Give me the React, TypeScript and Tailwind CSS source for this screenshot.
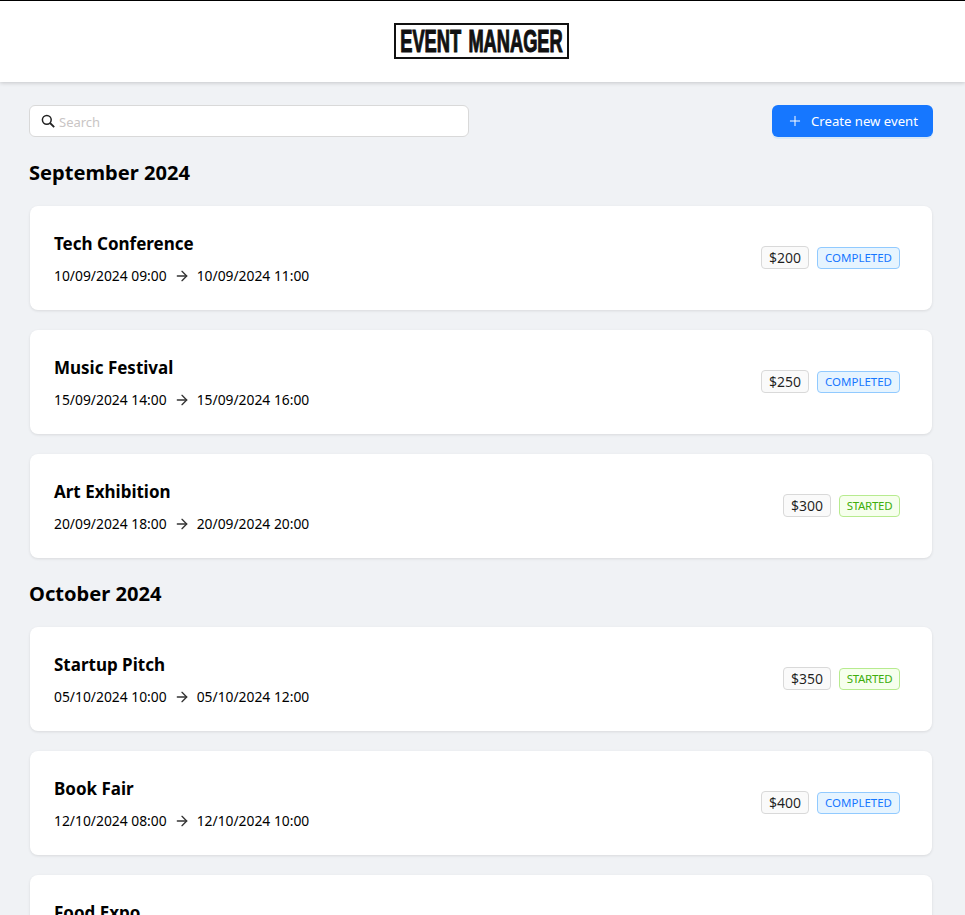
import { ArrowRight, Plus } from 'lucide-react'

type EventStatus = 'COMPLETED' | 'STARTED'

interface EventItem {
  title: string
  start: string
  end: string
  price: number
  status: EventStatus
}

const MONTHS: { label: string; events: EventItem[] }[] = [
  {
    label: 'September 2024',
    events: [
      { title: 'Tech Conference', start: '10/09/2024 09:00', end: '10/09/2024 11:00', price: 200, status: 'COMPLETED' },
      { title: 'Music Festival', start: '15/09/2024 14:00', end: '15/09/2024 16:00', price: 250, status: 'COMPLETED' },
      { title: 'Art Exhibition', start: '20/09/2024 18:00', end: '20/09/2024 20:00', price: 300, status: 'STARTED' },
    ],
  },
  {
    label: 'October 2024',
    events: [
      { title: 'Startup Pitch', start: '05/10/2024 10:00', end: '05/10/2024 12:00', price: 350, status: 'STARTED' },
      { title: 'Book Fair', start: '12/10/2024 08:00', end: '12/10/2024 10:00', price: 400, status: 'COMPLETED' },
      { title: 'Food Expo', start: '18/10/2024 11:00', end: '18/10/2024 13:00', price: 450, status: 'STARTED' },
    ],
  },
]

function EventCard({ event }: { event: EventItem }) {
  const statusClass =
    event.status === 'COMPLETED'
      ? 'w-[83px] border-[#91caff] bg-[#e6f4ff] text-[#1677ff]'
      : 'w-[61px] border-[#b7eb8f] bg-[#f6ffed] tracking-[-0.3px] text-[#3fae0c]'

  return (
    <div className="flex h-[104px] items-center justify-between rounded-lg bg-white pl-[24px] pr-[32px] shadow-[0_1px_3px_rgba(0,0,0,0.1)]">
      <div className="pt-[2px]">
        <h3 className="text-[17px] leading-[24px] font-bold text-black">{event.title}</h3>
        <div className="mt-[9px] flex items-center text-[13.85px] leading-[22px] text-black">
          <span>{event.start}</span>
          <ArrowRight size={16} strokeWidth={2} className="mx-[7px] text-[#333]" />
          <span>{event.end}</span>
        </div>
      </div>
      <div className="flex items-end gap-[8px] pb-[2px]">
        <span className="flex h-[23px] items-center rounded border border-[#d9d9d9] bg-[#fafafa] px-[7px] text-[14px] text-[rgba(0,0,0,0.88)]">
          ${event.price}
        </span>
        <span className={`flex h-[22px] items-center justify-center rounded border text-[11.5px] ${statusClass}`}>
          {event.status}
        </span>
      </div>
    </div>
  )
}

export default function App() {
  return (
    <div className="h-[915px] overflow-hidden bg-[#f0f2f5] font-['Noto_Sans',sans-serif]">
      <header className="flex h-[82px] items-center justify-center border-t border-black bg-white shadow-[0_1px_4px_rgba(0,0,0,0.18)]">
        <div className="mr-[2px] mb-[2px] flex h-[36px] w-[175px] items-center justify-center overflow-hidden border-2 border-[#111]">
          <span className="inline-block scale-x-[0.57] font-['Liberation_Sans',sans-serif] text-[32px] leading-none font-bold whitespace-nowrap text-[#111] [-webkit-text-stroke:1.2px_#111] [word-spacing:4px]">
            EVENT MANAGER
          </span>
        </div>
      </header>

      <main className="pt-[23px] pr-[32px] pl-[29px]">
        <div className="flex items-center justify-between">
          <div className="flex h-[32px] w-[440px] items-center rounded-md border border-[#d9d9d9] bg-white pl-[11px]">
            <svg width="14" height="14" viewBox="0 0 14 14" fill="none" stroke="#222" strokeWidth="1.5" aria-hidden="true">
              <circle cx="5.8" cy="5.8" r="4.4" />
              <path d="M9 9l4.2 4.2" strokeWidth="1.8" />
            </svg>
            <input
              placeholder="Search"
              className="ml-[4px] min-w-0 flex-1 translate-y-[2px] bg-transparent text-[13px] outline-none placeholder:text-[#c9c5c5]"
            />
          </div>
          <button
            type="button"
            className="flex h-[32px] w-[161px] items-center justify-center rounded-md bg-[#1677ff] text-[13.15px] text-white shadow-[0_2px_0_rgba(5,145,255,0.1)]"
          >
            <Plus size={16} strokeWidth={1.5} className="mr-[8px]" />
            <span className="translate-y-px">Create new event</span>
          </button>
        </div>

        {MONTHS.map((month, index) => (
          <section key={month.label} className={index === 0 ? 'mt-[22px]' : 'mt-[22.4px]'}>
            <h2 className="text-[20.1px] leading-[28px] font-bold text-black">{month.label}</h2>
            <div className="mt-[19px] flex flex-col gap-[20px] px-px">
              {month.events.map((event) => (
                <EventCard key={event.title} event={event} />
              ))}
            </div>
          </section>
        ))}
      </main>
    </div>
  )
}
